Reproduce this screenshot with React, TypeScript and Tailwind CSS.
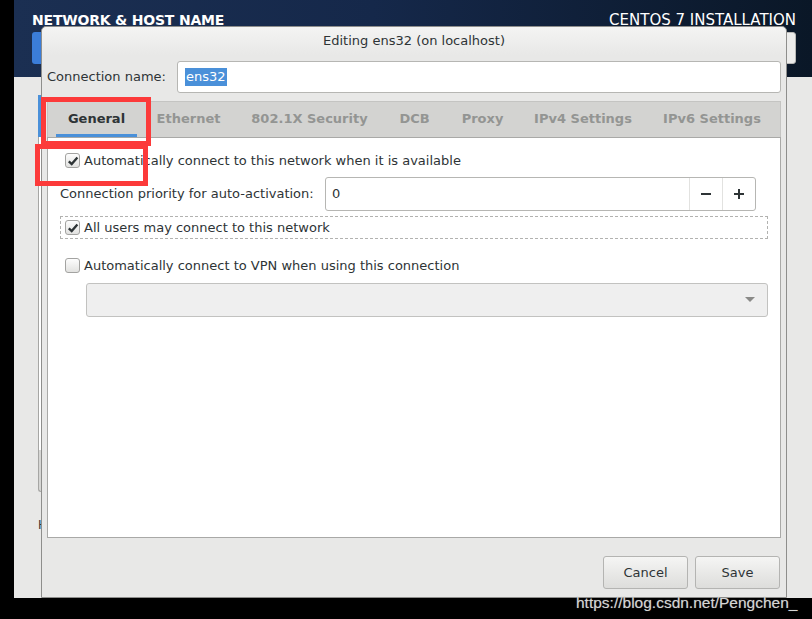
import React from "react";

const tabs = [
  { label: "General", w: "w-[89px]", active: true },
  { label: "Ethernet", w: "w-[95px]" },
  { label: "802.1X Security", w: "w-[147px]" },
  { label: "DCB", w: "w-[63px]" },
  { label: "Proxy", w: "w-[73px]" },
  { label: "IPv4 Settings", w: "w-[128px]" },
  { label: "IPv6 Settings", w: "w-[130px]" },
];

function CheckBox({ checked }: { checked?: boolean }) {
  return (
    <span className="w-[15px] h-[15px] shrink-0 rounded-[3px] border border-[#a3a3a1] bg-gradient-to-b from-[#fdfdfd] to-[#e2e2e0] flex items-center justify-center">
      {checked && (
        <svg width="12" height="12" viewBox="0 0 12 12">
          <path d="M1.8 6.3 L4.7 9.1 L10.4 2.4" stroke="#2e3436" strokeWidth="2.3" fill="none" />
        </svg>
      )}
    </span>
  );
}

export default function App() {
  return (
    <div className="relative w-[812px] h-[619px] overflow-hidden bg-black font-['DejaVu_Sans',sans-serif] text-[#2e3436]">
      <div className="flex h-[598px]">
        <div className="w-[14px] shrink-0 bg-black" />
        <div className="flex flex-1 flex-col bg-[#e8e8e7]">
          {/* installer header */}
          <div className="flex h-[77px] justify-between bg-[linear-gradient(90deg,#1b2f52_0%,#15284a_45%,#0a1727_100%)]">
            <div className="flex flex-col pl-[18px] pt-[11px]">
              <span className="text-[14px] font-bold leading-[18px] tracking-[-0.2px] text-white">NETWORK &amp; HOST NAME</span>
              <span className="mt-[3px] h-[32px] w-[60px] rounded-[3px] bg-[#3b7dd8]" />
            </div>
            <div className="flex flex-col items-end pr-[16px] pt-[11px]">
              <span className="text-[15px] leading-[18px] text-white">CENTOS 7 INSTALLATION</span>
              <span className="mt-[3px] h-[32px] w-[60px] rounded-[3px] border border-[#b8b8b6] bg-[#ececeb]" />
            </div>
          </div>
          {/* bits of the page behind the dialog */}
          <div className="flex flex-1 pl-[24px]">
            <div className="flex w-[4px] flex-col">
              <div className="mt-[18px] h-[42px] bg-[#4a90d9]" />
              <div className="h-[313px] border-l border-[#a6a6a4] bg-white" />
              <div className="h-[42px] rounded-bl-[3px] border-l border-b border-[#a6a6a4] bg-[#d6d6d4]" />
              <span className="mt-[26px] text-[12px] leading-[14px] text-[#2e3436]">H</span>
            </div>
          </div>
        </div>
      </div>

      {/* dialog window */}
      <div className="absolute left-[41px] top-[26px] flex h-[572px] w-[746px] flex-col rounded-t-[5px] border border-[#8e8e8c] bg-[#e8e8e7]">
        <div className="flex h-[28px] shrink-0 items-center justify-center rounded-t-[5px] bg-gradient-to-b from-[#f4f4f3] to-[#e8e8e7] text-[13px]">
          Editing ens32 (on localhost)
        </div>
        <div className="flex flex-1 flex-col px-[5px] pt-[6px] text-[13px]">
          <div className="flex h-[32px] items-center">
            <span className="w-[130px] shrink-0">Connection name:</span>
            <div className="flex h-full flex-1 items-center rounded-[3px] border border-[#b6b6b3] bg-white pl-[7px]">
              <span className="bg-[#4a90d9] px-[1px] leading-[18px] text-white">ens32</span>
            </div>
          </div>

          <div className="mt-[8px] flex h-[36px] items-stretch border-x border-t border-[#c4c4c2] bg-[#d3d3d1] pl-[4px]">
            {tabs.map((t) => (
              <div key={t.label} className={`${t.w} relative flex items-center justify-center pb-[2px]`}>
                <span className={`font-bold ${t.active ? "text-[#2e3436]" : "text-[#939593]"}`}>{t.label}</span>
                {t.active && <span className="absolute bottom-0 left-[4px] right-[4px] h-[3px] bg-[#4a90d9]" />}
              </div>
            ))}
          </div>

          <div className="flex h-[401px] flex-col border border-[#a9a9a7] bg-white px-[12px] pt-[15px]">
            <div className="flex h-[15px] items-center pl-[5px]">
              <CheckBox checked />
              <span className="ml-[4px]">Automatically connect to this network when it is available</span>
            </div>
            <div className="mt-[9px] flex h-[34px] items-center">
              <span className="w-[265px] shrink-0">Connection priority for auto-activation:</span>
              <div className="flex h-full w-[431px] rounded-[3px] border border-[#b6b6b3] bg-white">
                <span className="flex flex-1 items-center pl-[6px]">0</span>
                <span className="flex w-[33px] items-center justify-center border-l border-[#e2e2e0]">
                  <svg width="12" height="12" viewBox="0 0 12 12">
                    <path d="M1 6 H11" stroke="#2e3436" strokeWidth="2" />
                  </svg>
                </span>
                <span className="flex w-[33px] items-center justify-center border-l border-[#e2e2e0]">
                  <svg width="12" height="12" viewBox="0 0 12 12">
                    <path d="M1 6 H11 M6 1 V11" stroke="#2e3436" strokeWidth="2" />
                  </svg>
                </span>
              </div>
            </div>
            <div className="mt-[5px] flex h-[23px] items-center border border-dashed border-[#b2b2b0] pl-[4px]">
              <CheckBox checked />
              <span className="ml-[4px]">All users may connect to this network</span>
            </div>
            <div className="mt-[19px] flex h-[15px] items-center pl-[5px]">
              <CheckBox />
              <span className="ml-[4px]">Automatically connect to VPN when using this connection</span>
            </div>
            <div className="ml-[26px] mt-[10px] flex h-[34px] items-center justify-end rounded-[3px] border border-[#c2c2c0] bg-[#efefef] pr-[11px]">
              <svg width="12" height="8" viewBox="0 0 12 8">
                <path d="M1 1 H11 L6 6 Z" fill="#8a8a88" />
              </svg>
            </div>
          </div>

          <div className="mt-[18px] flex justify-end gap-[7px] pr-[1px]">
            {["Cancel", "Save"].map((b) => (
              <button
                key={b}
                className="h-[33px] w-[85px] rounded-[3px] border border-[#b4b4b2] bg-gradient-to-b from-[#f5f5f4] to-[#dddddb] text-[13px] text-[#2e3436]"
              >
                {b}
              </button>
            ))}
          </div>
        </div>
      </div>

      {/* red highlight boxes */}
      <div className="absolute left-[41px] top-[97px] h-[49px] w-[110px] border-[5px] border-[#fc3a3a]" />
      <div className="absolute left-[35px] top-[144px] h-[42px] w-[113px] border-[5px] border-[#fc3a3a]" />

      {/* watermark */}
      <div className="absolute left-[576px] top-[593px] font-['Liberation_Sans',Arial,sans-serif] text-[15.5px] leading-[20px] text-[#d4d4d4] [text-shadow:0_0_1px_#666]">
        https://blog.csdn.net/Pengchen_
      </div>
    </div>
  );
}
